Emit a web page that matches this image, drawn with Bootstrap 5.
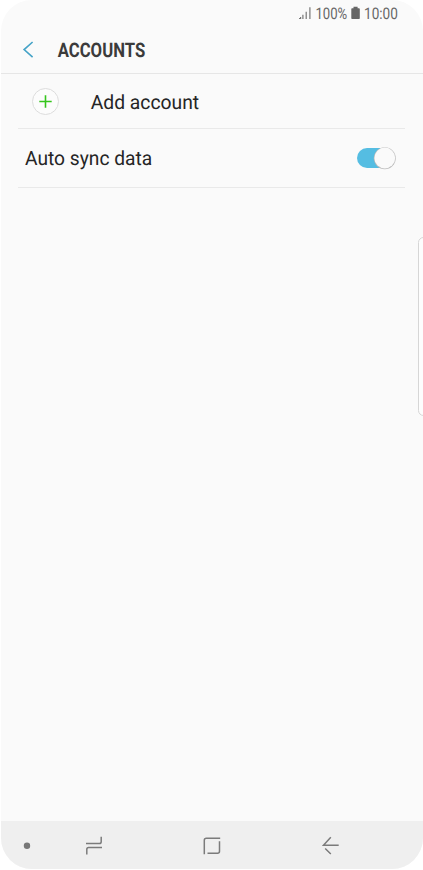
<!DOCTYPE html>
<html lang="en">
<head>
<meta charset="utf-8">
<meta name="viewport" content="width=device-width, initial-scale=1">
<title>Accounts</title>
<link href="https://cdn.jsdelivr.net/npm/bootstrap@5.3.0/dist/css/bootstrap.min.css" rel="stylesheet">
<style>
body{background:#fff;font-family:Roboto,"Liberation Sans",sans-serif;color:#252525;overflow:hidden}
.phone{width:422px;height:869px;margin-left:1px;background:#fafafa;border-radius:31px;font-size:19px;line-height:24px}
.phone text{text-rendering:geometricPrecision}
.status{height:27px;padding-right:15px;color:#666}
.status svg,.app-bar svg,.account-row svg,.nav-keys svg{display:block;flex:none}
.status text{font-size:16px;fill:#666}
.app-bar{height:46px;border-bottom:1px solid #e6e6e6;box-sizing:content-box}
.app-bar text{font-size:20px;font-weight:700;fill:#3b3b3b}
.setting{margin:0 18px 0 17px;border-bottom:1px solid #e9e9e9}
.account-row{height:55px;padding-left:14px}
.sync-row{height:59px;padding:0 8px 0 7px}
.label text{font-size:19.8px;fill:#252525}
.nav-keys{height:48px;background:#efefef}
.edge-panel{right:-6px;top:237px;width:11px;height:179px;border:1px solid #d6d6d6;border-radius:6px;background:#fdfdfd}
</style>
</head>
<body>
<main class="phone d-flex flex-column position-relative overflow-hidden">
  <div class="status d-flex justify-content-end">
    <svg width="112" height="27" viewBox="296 0 112 27">
      <path d="M299 18.5h1.6v-1.6M302.9 19v-4.3M306.2 19v-7.3M309.9 19V7.3" fill="none" stroke="#777" stroke-width="1.2"/>
      <text x="315.4" y="19" textLength="31.8" lengthAdjust="spacingAndGlyphs">100%</text>
      <path d="M351.3 9q0-.8.8-.8h1.4V6.8h4.1v1.4h1.4q.8 0 .8.8v9.2q0 .8-.8.8h-6.9q-.8 0-.8-.8z" fill="#666"/>
      <text x="364" y="19" textLength="33.8" lengthAdjust="spacingAndGlyphs">10:00</text>
    </svg>
  </div>
  <header class="app-bar">
    <svg width="200" height="46" viewBox="1 27 200 46">
      <path d="M32.6 42l-8.5 7.6 8.5 7.6" fill="none" stroke="#45a3c7" stroke-width="1.6"/>
      <text x="57.7" y="57" textLength="87.5" lengthAdjust="spacingAndGlyphs">ACCOUNTS</text>
    </svg>
  </header>
  <section class="flex-grow-1">
    <div class="setting account-row d-flex align-items-center">
      <svg class="label" width="180" height="54" viewBox="32 74 180 54">
        <circle cx="45.5" cy="101.5" r="13" fill="#fcfcfc" stroke="#dcdcdc"/>
        <path d="M39.3 101.5h12.4M45.5 95.3v12.4" stroke="#35c51c" stroke-width="1.6"/>
        <text x="90.7" y="109" textLength="108.5" lengthAdjust="spacingAndGlyphs">Add account</text>
      </svg>
    </div>
    <div class="setting sync-row d-flex justify-content-between align-items-center">
      <svg class="label" width="140" height="58" viewBox="25 129 140 58">
        <text x="25" y="165.3" textLength="127.3" lengthAdjust="spacingAndGlyphs">Auto sync data</text>
      </svg>
      <svg width="40" height="58" viewBox="357 129 40 58" role="img" aria-label="On">
        <rect x="357" y="148" width="36" height="20" rx="10" fill="#55bde2"/>
        <circle cx="384.8" cy="158.3" r="11" fill="#bdbdbd"/>
        <circle cx="384.8" cy="158" r="10.4" fill="#fafafa"/>
      </svg>
    </div>
  </section>
  <div class="edge-panel position-absolute"></div>
  <footer class="nav-keys">
    <svg width="422" height="48" viewBox="1 821 422 48" fill="none" stroke="#7b7b7b" stroke-width="1.5">
      <circle cx="27" cy="845.7" r="3.2" fill="#777" stroke="none"/>
      <path d="M86 843.6h13.4q1.8 0 1.8-1.8v-5.1M102 847.6H88.6q-1.8 0-1.8 1.8v5.1"/>
      <path d="M204.3 854.2v-14q0-2 2-2H220.2M219.5 841.2v10q0 2-2 2H207.5"/>
      <path d="M330.8 837.3l-7.3 8H338.7M325.2 848.5l5.6 5.5"/>
    </svg>
  </footer>
</main>
<script src="https://cdn.jsdelivr.net/npm/bootstrap@5.3.0/dist/js/bootstrap.bundle.min.js"></script>
</body>
</html>
